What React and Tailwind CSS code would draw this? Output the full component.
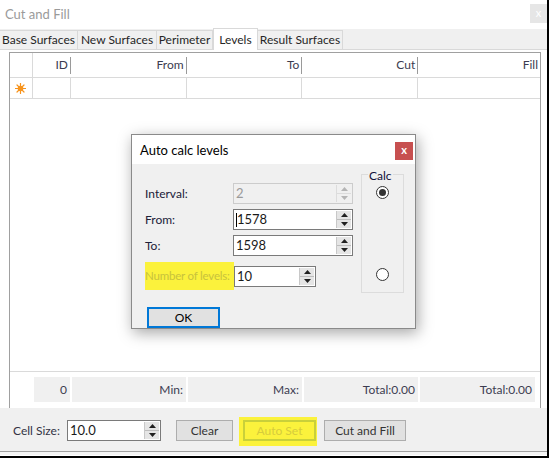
import React from 'react';

const font = { fontFamily: 'Lato, "Noto Sans", sans-serif' };

const Star = () => (
  <svg width="11" height="11" viewBox="0 0 11 11">
    <g stroke="#f7941d" strokeWidth="1.2" strokeLinecap="round">
      <line x1="5.5" y1="0.5" x2="5.5" y2="10.5" />
      <line x1="0.5" y1="5.5" x2="10.5" y2="5.5" />
      <line x1="2" y1="2" x2="9" y2="9" />
      <line x1="9" y1="2" x2="2" y2="9" />
    </g>
    <circle cx="5.5" cy="5.5" r="2.8" fill="#f7941d" />
  </svg>
);

const Spin = ({ disabled }) => {
  const c = disabled ? '#b5b5b5' : '#202020';
  return (
    <div className={`w-[15px] h-full flex flex-col border-l ${disabled ? 'border-[#dcdcdc]' : 'border-[#c8c8c8]'}`}>
      <div className={`flex-1 flex items-center justify-center border-b ${disabled ? 'bg-[#f0f0f0] border-[#dcdcdc]' : 'bg-[#e5e5e5] border-[#bdbdbd]'}`}>
        <svg width="7" height="4" viewBox="0 0 7 4"><polygon points="0,4 7,4 3.5,0" fill={c} /></svg>
      </div>
      <div className={`flex-1 flex items-center justify-center ${disabled ? 'bg-[#f0f0f0]' : 'bg-[#e5e5e5]'}`}>
        <svg width="7" height="4" viewBox="0 0 7 4"><polygon points="0,0 7,0 3.5,4" fill={c} /></svg>
      </div>
    </div>
  );
};

const NumInput = ({ value, width, disabled, caret }) => (
  <div
    className={`flex h-[21px] border p-px ${disabled ? 'bg-[#f0f0f0] border-[#cccccc] text-[#9a9a9a]' : 'bg-white border-[#7a7a7a] text-[#1a1a1a]'}`}
    style={{ width }}
  >
    <div className="flex-1 flex items-center pl-[1px] text-[13px] leading-none">
      {caret && <span className="w-px h-[14px] bg-black" />}
      {value}
    </div>
    <Spin disabled={disabled} />
  </div>
);

const Btn = ({ children, width, className = '' }) => (
  <div
    className={`h-[21px] flex items-center justify-center border ${className}`}
    style={{ width }}
  >
    {children}
  </div>
);

const tabs = [
  { label: 'Base Surfaces', w: 78 },
  { label: 'New Surfaces', w: 79 },
  { label: 'Perimeter', w: 56 },
  { label: 'Levels', w: 45, active: true },
  { label: 'Result Surfaces', w: 85 },
];

const cols = [
  { label: 'ID', w: 38 },
  { label: 'From', w: 116 },
  { label: 'To', w: 116 },
  { label: 'Cut', w: 116 },
  { label: 'Fill', w: 122, last: true },
];

const footer = [
  { t: '0', w: 36 },
  { t: 'Min:', w: 114 },
  { t: 'Max:', w: 114 },
  { t: 'Total:0.00', w: 114 },
  { t: 'Total:0.00', w: 115 },
];

export default function App() {
  return (
    <div className="relative w-[549px] h-[458px] bg-white border-r-2 border-b-2 border-black overflow-hidden text-[12px]" style={font}>
      {/* title bar */}
      <div className="h-[29px] flex items-center justify-between pl-[5px]">
        <span className="text-[#9a9a9a] text-[13px]">Cut and Fill</span>
        <div className="w-[17px] h-[19px] mt-[-3px] bg-[#e6e6e6] flex items-center justify-center text-white text-[11px]">x</div>
      </div>

      {/* tabs */}
      <div className="h-[21px] bg-[#f0f0f0] flex items-end border-b border-[#d9d9d9] text-[#262626]">
        {tabs.map((t) =>
          t.active ? (
            <div
              key={t.label}
              className="h-[22px] mb-[-1px] bg-white border border-b-0 border-[#d9d9d9] flex items-center justify-center"
              style={{ width: t.w }}
            >
              {t.label}
            </div>
          ) : (
            <div
              key={t.label}
              className="h-[19px] border-t border-r border-[#d9d9d9] flex items-center justify-center"
              style={{ width: t.w }}
            >
              {t.label}
            </div>
          )
        )}
      </div>

      {/* tab page */}
      <div className="h-[358px] bg-white pt-[2px] pl-[9px] pr-[6px]">
        <div className="h-[357px] border border-[#a0a0a0] flex flex-col text-[#3c3c50]">
          <div className="h-[25px] flex border-b border-[#dadada]">
            <div className="w-[23px] border-r border-[#dadada]" />
            {cols.map((c) => (
              <div key={c.label} className="flex items-center justify-end" style={{ width: c.w }}>
                <span className="pr-[2px]">{c.label}</span>
                {!c.last && <span className="w-px h-[17px] bg-[#9a9a9a]" />}
              </div>
            ))}
          </div>
          <div className="h-[21px] flex border-b border-[#dadada]">
            <div className="w-[23px] border-r border-[#dadada] flex items-center justify-center">
              <Star />
            </div>
            {cols.map((c) => (
              <div key={c.label} className={c.last ? '' : 'border-r border-[#dadada]'} style={{ width: c.w }} />
            ))}
          </div>
          <div className="flex-1" />
          <div className="h-[37px] border-t border-[#dadada] pt-[5px] pl-[24px] flex gap-[2px]">
            {footer.map((f, i) => (
              <div key={i} className="h-[25px] bg-[#f0f0f0] flex items-center justify-end pr-[3px]" style={{ width: f.w }}>
                {f.t}
              </div>
            ))}
          </div>
        </div>
      </div>

      {/* bottom panel */}
      <div className="h-[44px] bg-[#f0f0f0] border-b border-[#a0a0a0] flex items-start pt-[12px] pl-[13px] text-[#333344]">
        <span className="w-[54px] h-[21px] flex items-center">Cell Size:</span>
        <NumInput value="10.0" width={94} />
        <Btn width={57} className="ml-[15px] bg-[#e1e1e1] border-[#adadad] text-[#333]">Clear</Btn>
        <div className="ml-[6px] mt-[-3px] w-[78px] h-[29px] bg-[#fbf23c] pt-[3px] pl-[4px]">
          <Btn width={73} className="border-2 border-[#c9d03a] text-[#d6cc3c]">Auto Set</Btn>
        </div>
        <Btn width={82} className="ml-[7px] bg-[#e1e1e1] border-[#adadad] text-[#333]">Cut and Fill</Btn>
      </div>
      <div className="h-[3px] bg-[#f4f4f4]" />

      {/* dialog */}
      <div className="absolute left-[131px] top-[134px] w-[285px] h-[195px] bg-[#f0f0f0] border border-[#8a8a8a] shadow-[2px_4px_14px_rgba(0,0,0,0.35)] flex flex-col">
        <div className="h-[30px] bg-white flex items-center justify-between pl-[8px] pr-[2px] pt-[2px]">
          <span className="text-[13px] text-black">Auto calc levels</span>
          <div className="w-[18px] h-[18px] bg-[#c75050] flex items-center justify-center text-white text-[11px] font-bold leading-none pb-[2px]">x</div>
        </div>
        <div className="flex-1 flex">
          <div className="w-[229px] pl-[13px] pt-[19px] flex flex-col text-[#202038]">
            <div className="flex h-[21px] items-center">
              <span className="w-[88px]">Interval:</span>
              <NumInput value="2" width={120} disabled />
            </div>
            <div className="flex h-[21px] items-center mt-[5px]">
              <span className="w-[88px]">From:</span>
              <NumInput value="1578" width={120} caret />
            </div>
            <div className="flex h-[21px] items-center mt-[5px]">
              <span className="w-[88px]">To:</span>
              <NumInput value="1598" width={120} />
            </div>
            <div className="flex items-center mt-[6px]">
              <span className="w-[89px] h-[28px] bg-[#fbf23c] text-[#c8c23c] flex items-center whitespace-nowrap overflow-hidden text-[11.5px] tracking-[-0.2px]">Number of levels:</span>
              <NumInput value="10" width={82} />
            </div>
            <div className="mt-[17px] ml-[2px] w-[73px] h-[21px] bg-[#e1e1e1] border-2 border-[#0078d7] flex items-center justify-center text-black">
              OK
            </div>
          </div>
          <div className="relative mt-[10px] w-[43px] h-[119px] border border-[#dcdcdc] flex flex-col items-center">
            <span className="absolute top-[-6px] left-[6px] px-[1px] bg-[#f0f0f0] leading-[14px] text-[12px] text-[#10103a]">Calc</span>
            <div className="mt-[11px] w-[13px] h-[13px] rounded-full border border-[#333] bg-white flex items-center justify-center">
              <div className="w-[7px] h-[7px] rounded-full bg-[#333]" />
            </div>
            <div className="mt-[69px] w-[13px] h-[13px] rounded-full border border-[#333] bg-white" />
          </div>
        </div>
      </div>
    </div>
  );
}
